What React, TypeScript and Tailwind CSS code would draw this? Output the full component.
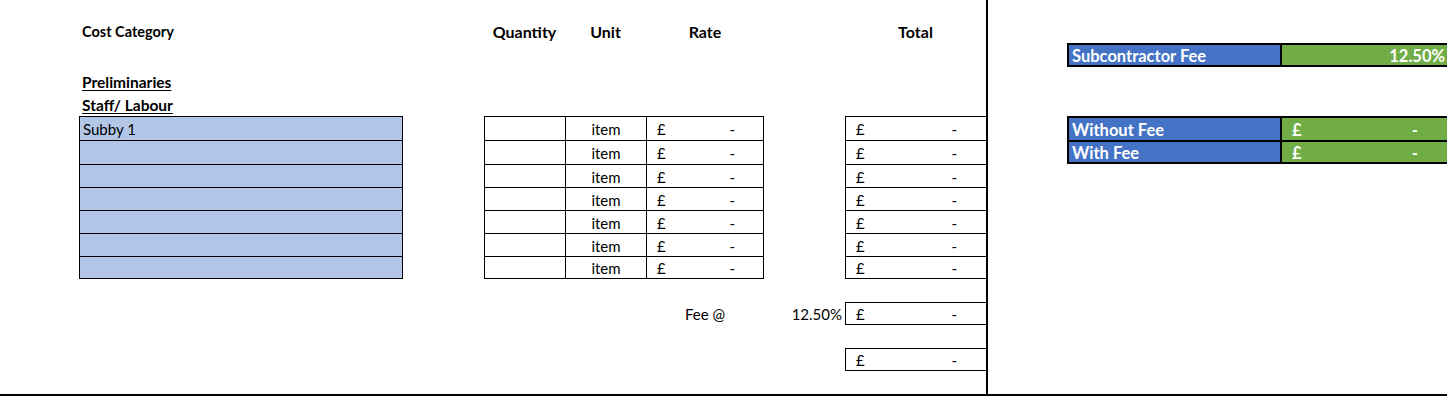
import React from "react";

const rows = ["Subby 1", "", "", "", "", "", ""];

// first two rows of the block are a pixel taller than the rest
const rowH = (i: number) => (i < 2 ? "h-[24px]" : "h-[23px]");
// each cell draws its top/left edge, the last one closes the bottom
const edge = (i: number) => (i === rows.length - 1 ? "border-l border-t border-b border-black" : "border-l border-t border-black");

function Money({ className = "" }: { className?: string }) {
  return (
    <div className={`flex items-center justify-between pl-[10px] pr-[29px] pt-[1px] ${className}`}>
      <span>£</span>
      <span>-</span>
    </div>
  );
}

export default function App() {
  return (
    <div className="h-[397px] w-[1447px] overflow-hidden bg-white text-black [font-family:Lato,'Liberation_Sans',sans-serif]">
      <div className="grid grid-cols-[79px_324px_81px_81px_81px_118px_81px_141px_81px_215px_165px] grid-rows-[20px_23px_24px_25px_24px_24px_24px_23px_23px_23px_23px_23px_23px_23px_23px_23px_23px] border-b-2 border-black text-[15px] leading-[20px]">
        {/* column headings */}
        <div className="col-start-2 row-start-2 flex items-center pl-[3px] pt-[1px] text-[14.5px] font-bold">Cost Category</div>
        <div className="col-start-4 row-start-2 flex items-center justify-center pt-[1px] text-[16px] font-bold">Quantity</div>
        <div className="col-start-5 row-start-2 flex items-center justify-center pt-[1px] text-[16px] font-bold">Unit</div>
        <div className="col-start-6 row-start-2 flex items-center justify-center pt-[1px] text-[16px] font-bold">Rate</div>
        <div className="col-start-8 row-start-2 flex items-center justify-center pt-[1px] text-[16px] font-bold">Total</div>

        {/* section labels */}
        <div className="col-start-2 row-start-4 flex items-end pl-[3px] text-[15.5px] font-bold">
          <span className="underline underline-offset-2">Preliminaries</span>
        </div>
        <div className="col-start-2 row-start-5 flex items-center pl-[3px] pt-[2px] text-[15.5px] font-bold">
          <span className="underline underline-offset-2">Staff/ Labour</span>
        </div>

        {/* cost category cells */}
        <div className="col-start-2 row-start-6 row-end-13 flex flex-col border-r border-black">
          {rows.map((label, i) => (
            <div key={i} className={`${rowH(i)} ${edge(i)} flex shrink-0 items-center bg-[#b4c6e7] pl-[3px] pt-[1px]`}>
              {label}
            </div>
          ))}
        </div>

        {/* quantity / unit / rate */}
        <div className="col-start-4 col-end-7 row-start-6 row-end-13 flex flex-col border-r border-black">
          {rows.map((_, i) => (
            <div key={i} className={`${rowH(i)} grid shrink-0 grid-cols-[81px_81px_118px] grid-rows-1`}>
              <div className={edge(i)} />
              <div className={`${edge(i)} flex items-center justify-center pt-[1px]`}>item</div>
              <Money className={edge(i)} />
            </div>
          ))}
        </div>

        {/* totals */}
        <div className="col-start-8 row-start-6 row-end-13 flex flex-col">
          {rows.map((_, i) => (
            <Money key={i} className={`${rowH(i)} ${edge(i)} shrink-0`} />
          ))}
        </div>

        {/* fee line */}
        <div className="col-start-6 row-start-14 flex items-center justify-center pt-[1px]">Fee @</div>
        <div className="col-start-7 row-start-14 flex items-center justify-end pr-[3px] pt-[1px]">12.50%</div>
        <Money className="col-start-8 row-start-14 border-y border-l border-black" />
        <Money className="col-start-8 row-start-16 border-y border-l border-black" />

        {/* divider between sheet and summary */}
        <div className="col-start-9 row-start-1 row-end-18 border-l-2 border-black" />

        {/* summary panel */}
        <div className="col-start-10 row-start-3 flex items-center border-2 border-black bg-[#4472c4] pl-[3px] pt-[2px] text-[16.5px] font-bold text-white">
          Subcontractor Fee
        </div>
        <div className="col-start-11 row-start-3 flex items-center justify-end border-y-2 border-black bg-[#70ad47] pr-[2px] pt-[2px] text-[16.5px] font-bold text-white">
          12.50%
        </div>

        <div className="col-start-10 row-start-6 flex items-center border-x-2 border-t-2 border-black bg-[#4472c4] pl-[3px] pt-[2px] text-[16.5px] font-bold text-white">
          Without Fee
        </div>
        <Money className="col-start-11 row-start-6 border-t-2 border-black bg-[#70ad47] pt-[2px] text-[16.5px] font-bold text-white" />
        <div className="col-start-10 row-start-7 flex items-center border-2 border-black bg-[#4472c4] pl-[3px] pt-[1px] text-[16.5px] font-bold text-white">
          With Fee
        </div>
        <Money className="col-start-11 row-start-7 border-y-2 border-black bg-[#70ad47] text-[16.5px] font-bold text-white" />
      </div>
    </div>
  );
}
